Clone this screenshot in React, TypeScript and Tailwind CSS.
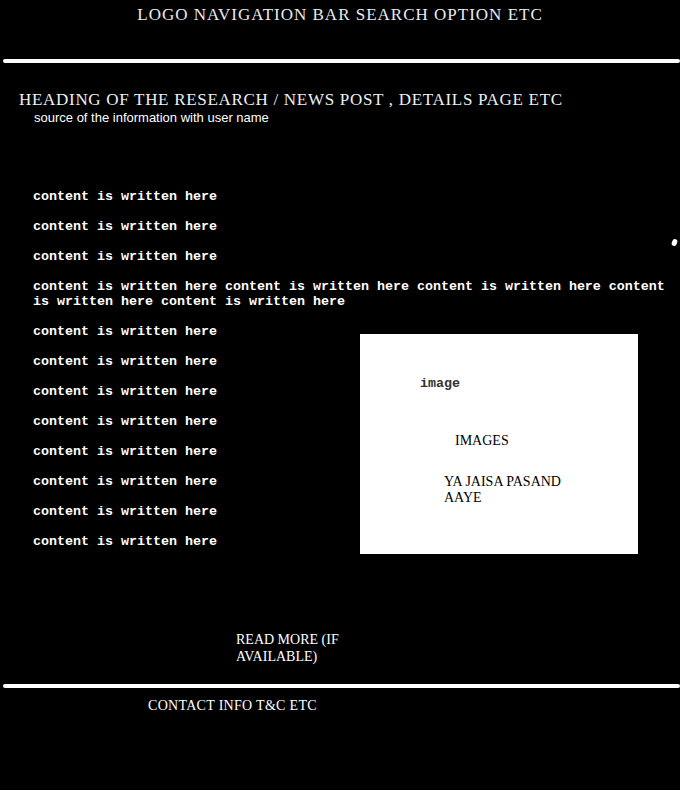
const lines = Array.from({ length: 8 })

const serif = "font-['Liberation_Serif',serif]"

export default function App() {
  return (
    <div className="min-h-[790px] w-[680px] bg-black text-white relative overflow-hidden">
      {/* Header */}
      <div className="h-[59px] pt-[2px] text-center">
        <p className={`${serif} text-[17px] tracking-[1px] text-[#e8ecf0]`}>
          LOGO NAVIGATION BAR SEARCH OPTION ETC
        </p>
      </div>
      <div className="ml-[3px] h-[4px] rounded-full bg-white" />

      {/* Title */}
      <div className="pl-[19px] pt-[27px]">
        <h1 className={`${serif} text-[17px] leading-[20px] tracking-[0.7px] text-[#eef0f2]`}>
          HEADING OF THE RESEARCH / NEWS POST , DETAILS PAGE ETC
        </h1>
        <p className="pl-[15px] font-['Liberation_Sans',sans-serif] text-[13px] leading-[15px]">
          source of the information with user name
        </p>
      </div>

      {/* Content */}
      <div className="pl-[33px] pr-[7px] pt-[64px] font-['Liberation_Mono',monospace] text-[13.33px] font-bold leading-[15px]">
        <p className="mb-[15px]">content is written here</p>
        <p className="mb-[15px]">content is written here</p>
        <p className="mb-[15px]">content is written here</p>
        <p className="mb-[15px]">
          content is written here content is written here content is written here content is written here content is written here
        </p>
        <div className="flex">
          <div className="w-[327px]">
            {lines.map((_, i) => (
              <p key={i} className="mb-[15px]">content is written here</p>
            ))}
          </div>
          <div className="mt-[10px] h-[220px] w-[278px] bg-white text-black">
            <p className="pl-[60px] pt-[42px] font-['Liberation_Mono',monospace] text-[13.33px] font-bold text-[#333]">
              image
            </p>
            <p className={`${serif} pl-[95px] pt-[42px] text-[14px] font-normal`}>IMAGES</p>
            <p className={`${serif} ml-[84px] mt-[26px] w-[125px] text-[14px] leading-[16px] font-normal`}>
              YA JAISA PASAND AAYE
            </p>
          </div>
        </div>
      </div>

      {/* Read more */}
      <p className={`${serif} ml-[236px] mt-[67px] w-[112px] text-[14px] leading-[17px]`}>
        READ MORE (IF AVAILABLE)
      </p>

      <div className="ml-[3px] mt-[19px] h-[4px] rounded-full bg-white" />

      {/* Footer */}
      <p className={`${serif} ml-[148px] mt-[7px] text-[14px] tracking-[0.3px]`}>CONTACT INFO T&amp;C ETC</p>

      <span className="absolute left-[672px] top-[239px] h-[7px] w-[5px] rotate-[20deg] rounded-full bg-white" />
    </div>
  )
}
